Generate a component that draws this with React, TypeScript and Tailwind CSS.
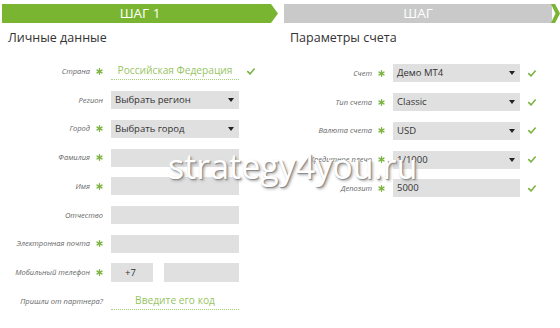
const font = { fontFamily: '"Open Sans", "Noto Sans", sans-serif' };

const Star = () => (
  <svg width="7" height="7" viewBox="0 0 10 10" className="shrink-0">
    <g stroke="#7cb342" strokeWidth="2" strokeLinecap="round">
      <line x1="5" y1="1" x2="5" y2="9" />
      <line x1="1.5" y1="3" x2="8.5" y2="7" />
      <line x1="1.5" y1="7" x2="8.5" y2="3" />
    </g>
  </svg>
);

const Check = () => (
  <svg width="8" height="7" viewBox="0 0 10 8">
    <path d="M1 4.2 L3.8 7 L9 1" fill="none" stroke="#7cb342" strokeWidth="2" strokeLinecap="round" />
  </svg>
);

const Caret = () => (
  <svg width="6" height="4" viewBox="0 0 6 4">
    <path d="M0 0 H6 L3 4 Z" fill="#222" />
  </svg>
);

type Row = {
  label: string;
  req?: boolean;
  kind: "link" | "select" | "input" | "phone";
  value?: string;
  check?: boolean;
};

const left: Row[] = [
  { label: "Страна", req: true, kind: "link", value: "Российская Федерация", check: true },
  { label: "Регион", kind: "select", value: "Выбрать регион" },
  { label: "Город", req: true, kind: "select", value: "Выбрать город" },
  { label: "Фамилия", req: true, kind: "input" },
  { label: "Имя", req: true, kind: "input" },
  { label: "Отчество", kind: "input" },
  { label: "Электронная почта", req: true, kind: "input" },
  { label: "Мобильный телефон", req: true, kind: "phone" },
  { label: "Пришли от партнера?", kind: "link", value: "Введите его код" },
];

const right: Row[] = [
  { label: "Счет", req: true, kind: "select", value: "Демо MT4", check: true },
  { label: "Тип счета", req: true, kind: "select", value: "Classic", check: true },
  { label: "Валюта счета", req: true, kind: "select", value: "USD", check: true },
  { label: "Кредитное плечо", req: true, kind: "select", value: "1/1000", check: true },
  { label: "Депозит", req: true, kind: "input", value: "5000", check: true },
];

function Field({ row }: { row: Row }) {
  if (row.kind === "link")
    return (
      <div className="flex h-[18px] w-full items-center justify-center whitespace-nowrap border-b border-dotted border-[#a5cf78] text-[10.2px] text-[#97c463]">
        {row.value}
      </div>
    );
  if (row.kind === "phone")
    return (
      <div className="flex w-full gap-[11px]">
        <div className="flex h-[19px] w-[42px] items-center bg-[#e0e0e0] pl-[14px] text-[9.5px] text-[#333]">+7</div>
        <div className="h-[19px] flex-1 bg-[#e0e0e0]" />
      </div>
    );
  return (
    <div className="flex h-[18px] w-full items-center justify-between bg-[#e0e0e0] pl-[4px] pr-[5px] text-[9.5px] text-[#333]">
      <span>{row.value}</span>
      {row.kind === "select" && <Caret />}
    </div>
  );
}

function Form({ rows, labelW, fieldW }: { rows: Row[]; labelW: number; fieldW: number }) {
  return (
    <div className="flex flex-col">
      {rows.map((r) => (
        <div key={r.label} className="flex h-[28.75px] items-center">
          <div className="flex items-center justify-end gap-[6px] pr-[1px]" style={{ width: labelW }}>
            <span className="whitespace-nowrap text-[7.5px] italic text-[#666]">{r.label}</span>
            {r.req && <Star />}
          </div>
          <div className="ml-[7px]" style={{ width: fieldW }}>
            <Field row={r} />
          </div>
          <div className="ml-[8px] w-[10px]">{r.check && <Check />}</div>
        </div>
      ))}
    </div>
  );
}

export default function App() {
  return (
    <div className="relative h-[328px] w-[560px] overflow-hidden bg-white" style={font}>
      <div className="flex pt-[4px]">
        <div className="ml-[2px] flex h-[19px] w-[276px] items-center justify-center bg-[#7ab532] text-[13.5px] text-white [clip-path:polygon(0_0,calc(100%-7px)_0,100%_50%,calc(100%-7px)_100%,0_100%)]">
          ШАГ 1
        </div>
        <div className="ml-[6px] flex h-[19px] w-[268px] items-center justify-center bg-[#c9c9c9] text-[13.5px] text-white">
          ШАГ
        </div>
        <div className="-ml-[1px] h-[19px] w-[9px] bg-[#7ab532] [clip-path:polygon(0_0,45%_0,100%_50%,45%_100%,0_100%,50%_50%)]" />
      </div>
      <div className="flex">
        <div className="w-[282px]">
          <div className="pl-[8px] pt-[7px] text-[12.5px] leading-[16px] text-[#333]">Личные данные</div>
          <div className="mt-[11px]">
            <Form rows={left} labelW={104} fieldW={128} />
          </div>
        </div>
        <div className="flex-1">
          <div className="pl-[8px] pt-[7px] text-[12.5px] leading-[16px] text-[#333]">Параметры счета</div>
          <div className="mt-[13px]">
            <Form rows={right} labelW={104} fieldW={127} />
          </div>
        </div>
      </div>
      <div
        className="pointer-events-none absolute left-[168px] top-[146px] text-[34px] leading-[40px] text-white"
        style={{ textShadow: "1px 1px 1px #888, 2px 2px 3px #aaa" }}
      >
        strategy4you.ru
      </div>
    </div>
  );
}
